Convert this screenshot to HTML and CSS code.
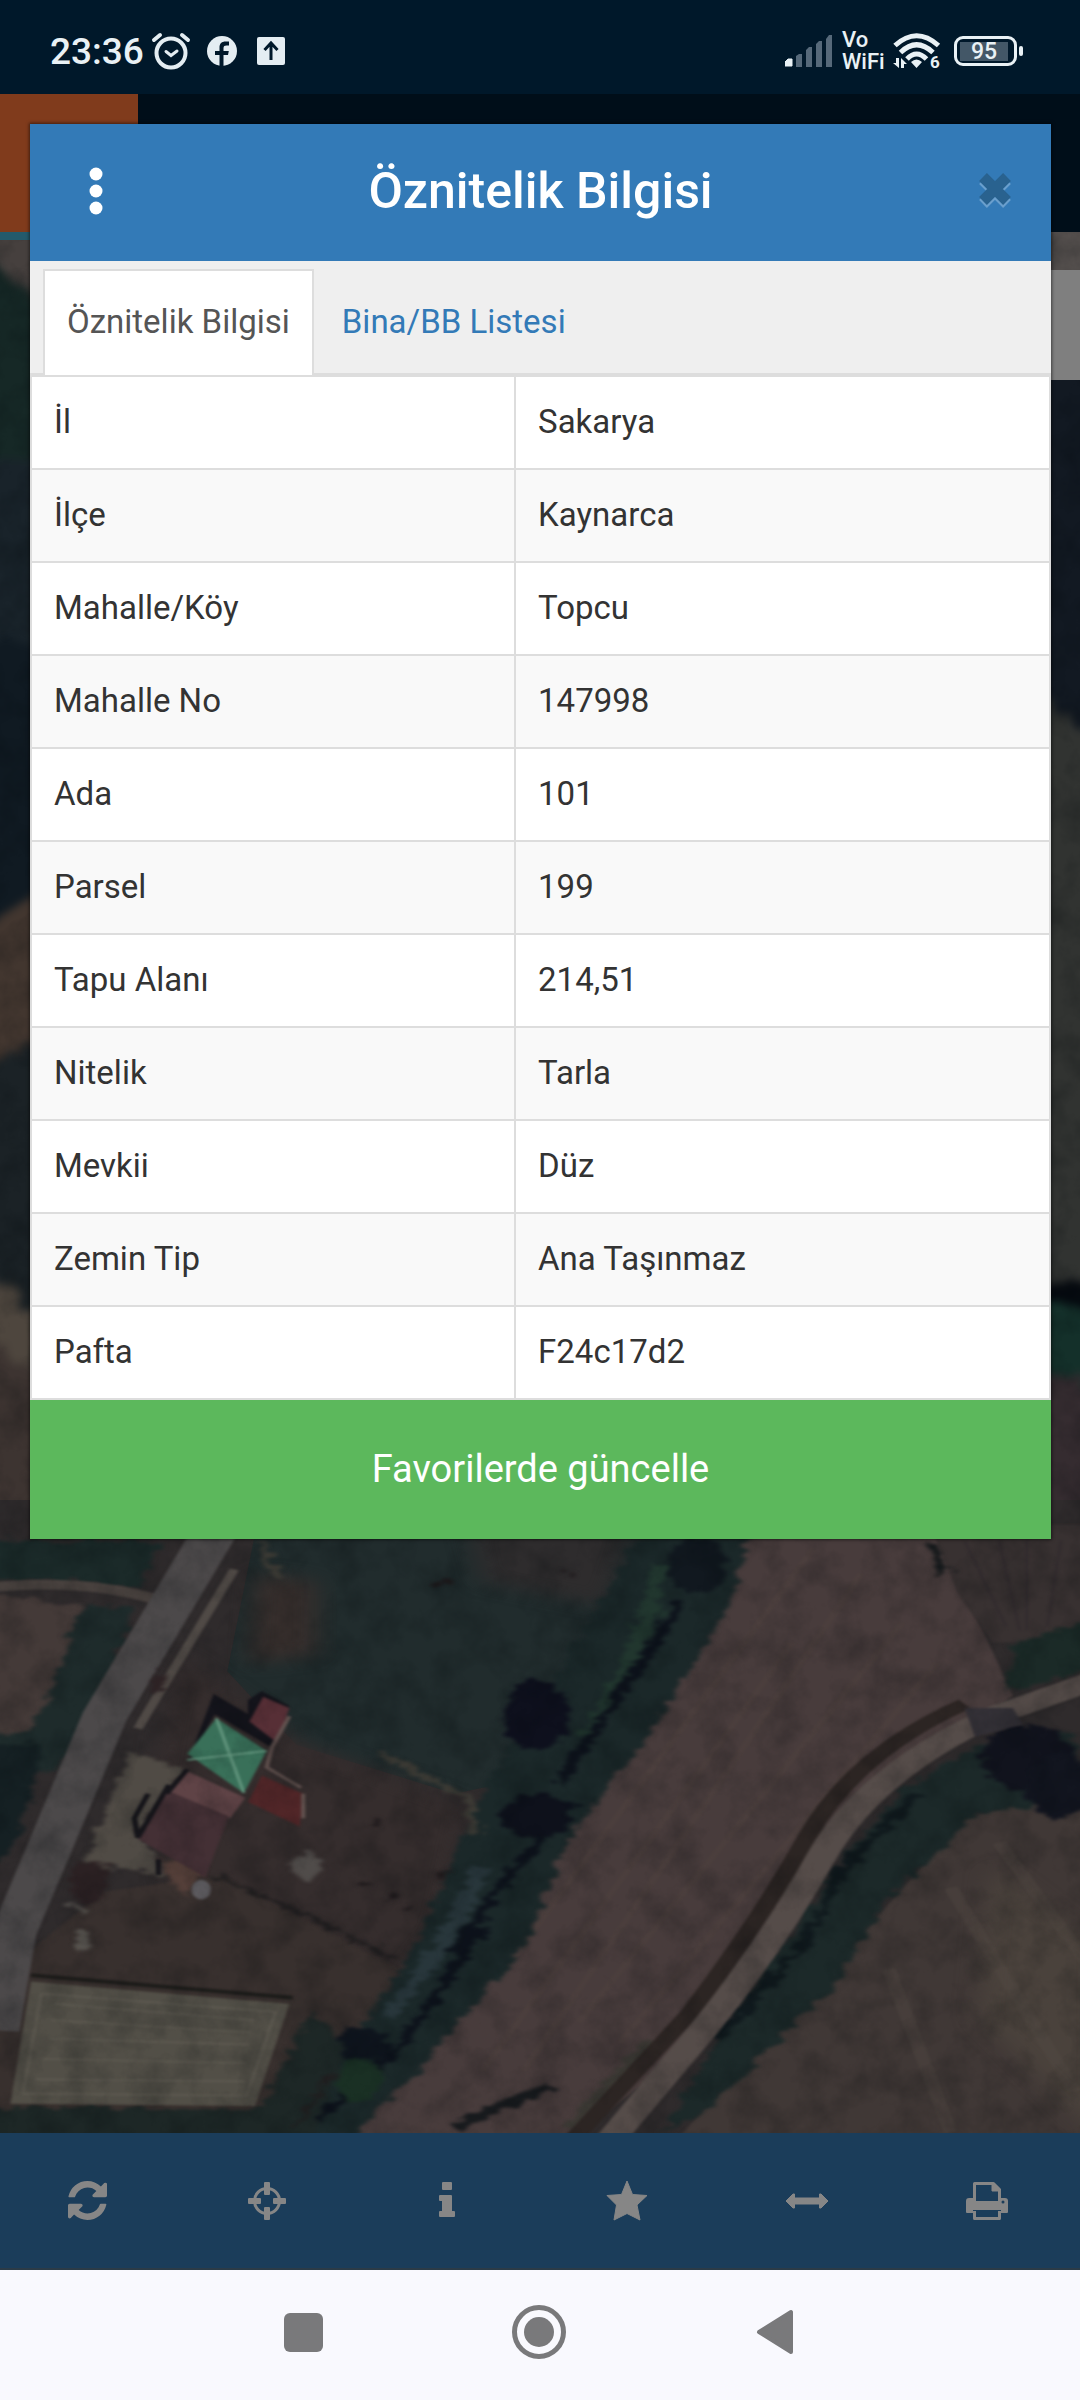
FILE: index.html
```
<!DOCTYPE html>
<html lang="tr">
<head>
    <meta charset="UTF-8">
    <meta name="viewport" content="width=device-width, initial-scale=1.0">
    <title>Öznitelik Bilgisi</title>
    <link rel="stylesheet" href="styles.css">
</head>
<body>
    <div class="status-bar">
        <div class="status-left">
            <span class="clock">23:36</span>
            <svg class="alarm-icon" width="40" height="38" viewBox="0 0 40 38" fill="none" stroke="#e4edf2" stroke-linecap="round">
                <circle cx="20" cy="21" r="14.500" stroke-width="4"/>
                <path d="M3 8l6-5M37 8l-6-5" stroke-width="4"/>
                <path d="M15 19.500l5 4 6-4.500" stroke-width="3"/>
            </svg>
            <svg width="30" height="30" viewBox="0 0 30 30">
                <circle cx="15" cy="15" r="15" fill="#e4edf2"/>
                <path d="M12.500 30V19H8v-4h4.500v-3.500c0-4 2.300-6 6-6h3.500v4h-2.500c-2 0-3 .8-3 2.500v3h5.300l-.8 4h-4.500v11z" fill="#00182a"/>
            </svg>
            <svg width="28" height="28" viewBox="0 0 28 28">
                <rect width="28" height="28" rx="2" fill="#e4edf2"/>
                <path d="M14 23V7M7.500 13L14 6l6.500 7" fill="none" stroke="#00182a" stroke-width="3"/>
            </svg>
        </div>
        <div class="status-right">
            <svg width="48" height="32" viewBox="0 0 48 32" fill="#56697a">
                <path d="M0 31v-4l3-3h4v7z" fill="#e9f1f5" stroke="#e9f1f5" stroke-linejoin="round"/>
                <path d="M11 32V21l3-2h3v13zM21 32V15l3-3h3v20zM31 32V9l3-3h3v26zM41 32V4l3-4h3v32z"/>
            </svg>
            <span class="vowifi"><span>Vo</span><span>WiFi</span></span>
            <svg width="48" height="44" viewBox="0 -3 48 44">
                <g fill="none" stroke="#e9f1f5" stroke-width="5">
                    <path d="M2 13.500Q23.500-6 45.500 13.500"/>
                    <path d="M7.500 20.500Q23.500 5 40 20.500"/>
                    <path d="M14 27Q23.500 17 33.500 27"/>
                </g>
                <path d="M18 30q5.500-5 11 0l-5.500 6zM0 31h3v-5h3v10zM8 26l6 6h-3v4H8z" fill="#e9f1f5"/>
                <text class="wifi-gen" x="37" y="36">6</text>
            </svg>
            <span class="battery"><span>95</span></span>
        </div>
    </div>

    <div class="app">
        <header class="app-header">
            <div class="app-logo"></div>
        </header>

        <div class="map">
            <svg class="map-view" viewBox="0 232 1080 1901" preserveAspectRatio="xMidYMin slice">
                <defs>
                    <filter id="rough" x="-10%" y="-10%" width="120%" height="120%" color-interpolation-filters="sRGB">
                        <feTurbulence type="fractalNoise" baseFrequency="0.05" numOctaves="4" seed="4"/>
                        <feDisplacementMap in="SourceGraphic" scale="36" xChannelSelector="R" yChannelSelector="G" result="edge"/>
                        <feGaussianBlur in="edge" stdDeviation="4"/>
                    </filter>
                    <filter id="soft" color-interpolation-filters="sRGB"><feGaussianBlur stdDeviation="2"/></filter>
                    <filter id="haze" x="-30%" y="-30%" width="160%" height="160%" color-interpolation-filters="sRGB"><feGaussianBlur stdDeviation="18"/></filter>
                    <filter id="grain" x="0" y="0" width="100%" height="100%" color-interpolation-filters="sRGB">
                        <feTurbulence type="fractalNoise" baseFrequency="0.03" numOctaves="5" seed="8"/>
                        <feColorMatrix values="0 0 0 0 0  0 0 0 0 0.02  0 0 0 0 0.03  1.400 0 0 0 -0.550"/>
                    </filter>
                </defs>
                <rect y="232" width="1080" height="1901" fill="#2c2c2c"/>

                <!-- land on both sides, above the fields -->
                <g filter="url(#rough)">
                    <path d="M-30 222h90v70l-90-30z" fill="#46403e"/>
                    <path d="M-30 250l90 60v330h-90z" fill="#162826"/>
                    <path d="M-30 460h90v190h-90z" fill="#19232a"/>
                    <path d="M-30 640h90v270l-90 50z" fill="#101a22"/>
                    <path d="M-30 925l90-30v150l-90 20z" fill="#42362f"/>
                    <path d="M-30 1065l90-20v290l-90-70z" fill="#1b2226"/>
                    <path d="M-30 1265l90 60v70l-90-60z" fill="#4e463e"/>
                    <path d="M-30 1330l90 70v140h-90z" fill="#3d3431"/>
                    <path d="M1030 222h70v80h-70z" fill="#55504e"/>
                    <path d="M1030 360h70v370h-70z" fill="#121922"/>
                    <path d="M1030 690l70 60v540h-70z" fill="#313331"/>
                    <path d="M1030 1290h70v85h-70z" fill="#14302a"/>
                    <path d="M1030 1285h70v18h-70z" fill="#05090f"/>
                    <path d="M1030 1375h70v190h-70z" fill="#352c30"/>
                </g>

                <!-- lower half of the scene -->
                <g transform="translate(0 1500) scale(0.689 0.408)">
                    <rect width="1568" height="1560" fill="#2f2b2c"/>
                    <path d="M380 0H1000L960 300 880 640 660 720 430 600 330 420z" fill="#212c2d"/>
                    <path d="M680 60l240 0-40 200-180-60z" fill="#2e2c2d" filter="url(#haze)"/>
                    <path d="M370 180l90 20 0 180-100 20z" fill="#362e2c" filter="url(#haze)"/>
                    <path d="M260 380l180 220 240 150-40 300-60 130-330-200-30-250z" fill="#352d2d" filter="url(#haze)"/>
                    <path d="M150 960l170-40 260 230-130 420H-20v-380z" fill="#38302e" filter="url(#soft)"/>

                    <!-- fields -->
                    <path d="M1080 60h270l60 200 60 220-270 330-240 590-130 160H440l230-400 150-500z" fill="#483c3c" filter="url(#soft)"/>
                    <path d="M1350 60h240v280l-150 10-50-120z" fill="#383131" filter="url(#soft)"/>
                    <path d="M1400 780l180-80v890H970l200-370z" fill="#403836" filter="url(#soft)"/>
                    <path d="M1440 900l160 200v470l-180-300z" fill="#4a423c" filter="url(#haze)"/>
                    <path d="M-20 230l140 30-30 260-70 80-40-10z" fill="#443a38" filter="url(#rough)"/>
                    <g stroke="#51443f" stroke-width="10" opacity=".35" filter="url(#soft)">
                        <path d="M1180 120L720 1180M1250 180L760 1400M1310 300L840 1280M1150 350L700 1400M1360 400L900 1330"/>
                    </g>
                    <g stroke="#29242a" stroke-width="4" opacity=".4" filter="url(#soft)">
                        <path d="M1400 100l60 210M1450 100l30 220M1490 100v220M1540 100l-20 210"/>
                    </g>
                    <g stroke="#574e47" stroke-width="20" opacity=".3" filter="url(#soft)" fill="none">
                        <path d="M1450 840l130 300M1380 950l180 500M1290 1150l90 400"/>
                    </g>

                    <!-- trees -->
                    <g filter="url(#rough)">
                        <path d="M-20 100h260l-40 110-220-20z" fill="#1b2a29"/>
                        <path d="M120 260h80l-70 300-50 110L-20 640v-60l70-20z" fill="#1e2b2b"/>
                        <path d="M-20 600h80l-30 220-50 100z" fill="#152023"/>
                        <path d="M960 60h130l-30 200-110 300-120 260-70 280-160 310-90 150H430l60-190 100-240 80-300 60-200 80-200 110-320z" fill="#1b2829"/>
                        <path d="M970 240l-100 320 50-240z" fill="#22382f"/>
                        <path d="M960 160L920 380 850 580" fill="none" stroke="#21362e" stroke-width="22"/>
                        <path d="M990 250L880 520 810 700M830 740l-120 240-50 130M700 1050l-120 290-120 180" fill="none" stroke="#0d121b" stroke-width="16"/>
                        <ellipse cx="1010" cy="160" rx="42" ry="70" fill="#11181f"/>
                        <ellipse cx="778" cy="530" rx="48" ry="88" fill="#0e101d"/>
                        <ellipse cx="780" cy="775" rx="50" ry="56" fill="#0e111b"/>
                        <ellipse cx="525" cy="1335" rx="40" ry="44" fill="#0f151e"/>
                        <path d="M700 900l-60 200-80 170" fill="none" stroke="#28363b" stroke-width="26"/>
                        <ellipse cx="520" cy="1420" rx="34" ry="50" fill="#1a3024"/>
                        <path d="M1470 350l130-60v120l-140 60z" fill="#1b2a27"/>
                        <path d="M1420 600l140-30 20 160-160 40-130 200-80 220-180 300-70 70 80-240 180-430 90-180z" fill="#1c2929"/>
                        <path d="M1330 720l-110 190-50 170-130 240" fill="none" stroke="#10191d" stroke-width="16"/>
                        <ellipse cx="1490" cy="630" rx="66" ry="80" fill="#11131d"/>
                        <ellipse cx="1540" cy="700" rx="50" ry="80" fill="#12151f"/>
                        <path d="M-20 1490h400l70-240 50 80-50 260H-20z" fill="#1d2726"/>
                        <path d="M660 1540l60-50 80-50" fill="none" stroke="#171a1d" stroke-width="22"/>
                        <path d="M310 920l150 110 120 100M430 1540l50-130" fill="none" stroke="#201e1f" stroke-width="9"/>
                        <path d="M550 620l130 110 10 90M380 100l20 90" fill="none" stroke="#3e3c36" stroke-width="14"/>
                        <path d="M1355 110l14 70" stroke="#14181a" stroke-width="18"/>
                        <path d="M830 1540l90-170 30-40" fill="none" stroke="#3a3833" stroke-width="24"/>
                    </g>

                    <!-- roads -->
                    <g fill="none" filter="url(#soft)" stroke-linejoin="round">
                        <path d="M-20 215Q120 190 230 245" stroke="#48413e" stroke-width="24"/>
                        <path d="M325 40L152 530 85 800 20 1060-5 1300" stroke="#4c494a" stroke-width="66"/>
                        <path d="M340 170L200 560" stroke="#504a46" stroke-width="14"/>
                        <path d="M1400 500Q1240 620 1170 830T1000 1260L830 1570" stroke="#2c2523" stroke-width="28"/>
                        <path d="M1600 435L1440 530Q1260 670 1190 880T1020 1300L880 1580" stroke="#554c49" stroke-width="44"/>
                        <path d="M1400 510l70 0 15 40-70 30z" fill="#343137"/>
                    </g>

                    <!-- farm yard and houses -->
                    <g filter="url(#rough)">
                        <path d="M190 620l80 40-70 150 40 110-120-30z" fill="#504b45"/>
                        <path d="M110 880l50 20-20 90-40-20zM225 420l20 10-10 50-15-20z" fill="#2d2224"/>
                        <ellipse cx="445" cy="895" rx="20" ry="34" fill="#504c4a"/>
                        <path d="M110 1050l20 10-8 50-10-20zM95 990l25 10v20z" fill="#5c5853"/>
                        <path d="M230 880l70 20-30 80z" fill="#543f39"/>
                        <g fill="#1f1a1c">
                            <circle cx="530" cy="940" r="9"/>
                            <circle cx="568" cy="972" r="10"/>
                            <circle cx="590" cy="1000" r="7"/>
                            <circle cx="545" cy="790" r="7"/>
                            <circle cx="640" cy="920" r="9"/>
                            <circle cx="645" cy="200" r="7"/>
                            <circle cx="825" cy="185" r="7"/>
                        </g>
                    </g>
                    <g filter="url(#soft)">
                        <path d="M310 475l50 50 0-35 20-22 40 37-28 100-80-80-40 120z" fill="#14141b"/>
                        <path d="M382 482l38 28-18 85-40-52z" fill="#572f36"/>
                        <path d="M380 675l60 45-5 80-75-60z" fill="#512628"/>
                        <path d="M420 530l-25 75-8 50 50 50M440 720v60" fill="none" stroke="#635350" stroke-width="6"/>
                        <path d="M272 665l84 65-22 50-92-60z" fill="#5f4346"/>
                        <path d="M240 710l92 65-34 150-98-95z" fill="#443035"/>
                        <path d="M314 535l73 80-33 104-82-97z" fill="#397059"/>
                        <path d="M314 535l40 183M272 637l115-22" stroke="#679a82" stroke-width="4"/>
                        <path d="M215 720l-20 60 5 48 45-130M272 660l-30 60M230 880v40" fill="none" stroke="#17161b" stroke-width="8"/>
                        <ellipse cx="292" cy="955" rx="14" ry="24" fill="#5c5a5e"/>
                    </g>
                    <g filter="url(#soft)">
                        <path d="M45 1180l375 55-50 250L15 1480z" fill="#524f47"/>
                        <path d="M45 1165l380 55" stroke="#1e1d1b" stroke-width="10"/>
                        <g stroke="#5e5a51" stroke-width="4" fill="none">
                            <path d="M60 1210l340 45-42 205-325-5zM80 1235l290 40M75 1275l290 30M70 1320l290 15M60 1370l295 10M50 1420l305 5"/>
                        </g>
                    </g>
                </g>
                <rect y="232" width="1080" height="1901" filter="url(#grain)" opacity=".3"/>
            </svg>
            <div class="map-control"></div>
        </div>

        <div class="toolbar">
            <button type="button" aria-label="Yenile">
                <svg width="39" height="39" viewBox="0 0 1536 1536" fill="currentColor">
                    <path d="M1511 928q0 5-1 7-64 268-268 434.500T764 1536q-146 0-282.500-55T238 1324l-129 129q-19 19-45 19t-45-19-19-45V960q0-26 19-45t45-19h448q26 0 45 19t19 45-19 45l-137 137q71 66 161 102t187 36q134 0 250-65t186-179q11-17 53-117 8-23 30-23h192q13 0 22.500 9.500t9.500 22.500zm25-800v448q0 26-19 45t-45 19h-448q-26 0-45-19t-19-45 19-45l138-138Q969 256 768 256q-134 0-250 65T332 500q-11 17-53 117-8 23-30 23H50q-13 0-22.500-9.500T18 608v-7q65-268 270-434.500T768 0q146 0 284 55.500T1297 212l130-129q19-19 45-19t45 19 19 45z"/>
                </svg>
            </button>
            <button type="button" aria-label="Konum">
                <svg width="38" height="38" viewBox="0 0 38 38" fill="currentColor">
                    <circle cx="19" cy="19" r="12.500" fill="none" stroke="currentColor" stroke-width="3"/>
                    <rect x="16" y="0" width="6" height="13" rx="1"/>
                    <rect x="16" y="25" width="6" height="13" rx="1"/>
                    <rect x="0" y="16" width="13" height="6" rx="1"/>
                    <rect x="25" y="16" width="13" height="6" rx="1"/>
                </svg>
            </button>
            <button type="button" aria-label="Bilgi">
                <svg width="16" height="38" viewBox="0 0 16 38" fill="currentColor">
                    <rect x="3" y="0" width="10" height="8" rx="1"/>
                    <path d="M1 13h11q1 0 1 1v15h2q1 0 1 1v4q0 1-1 1H1q-1 0-1-1v-4q0-1 1-1h2V19H1q-1 0-1-1v-4q0-1 1-1z"/>
                </svg>
            </button>
            <button type="button" aria-label="Favoriler">
                <svg width="42" height="42" viewBox="0 0 42 42" fill="currentColor" stroke="currentColor" stroke-width="1" stroke-linejoin="round">
                    <path d="M21 1l5.500 13.500L41 15.500 31 25l3 15-13-6.500L8 40l2.500-15L1 15.500l14.500-1z"/>
                </svg>
            </button>
            <button type="button" aria-label="Ölçüm">
                <svg width="44" height="16" viewBox="0 0 44 16" fill="currentColor" stroke="currentColor" stroke-width="1" stroke-linejoin="round">
                    <path d="M1 8l7-7h1.500v4h25V1H36l7 7-7 7h-1.500v-4h-25v4H8z"/>
                </svg>
            </button>
            <button type="button" aria-label="Yazdır">
                <svg width="42" height="38" viewBox="0 0 42 38" fill="none" stroke="currentColor" stroke-width="3" stroke-linejoin="round">
                    <path d="M8.500 20V1.500h19l6 6V20M8.500 29v7.500h25V29"/>
                    <path d="M26 1l8 8h-8z" fill="currentColor" stroke-width="1"/>
                    <path d="M3 16h4v3h28v-3h4q3 0 3 3v11q0 1-1 1h-6v-3H7v3H1q-1 0-1-1V19q0-3 3-3z" fill="currentColor" stroke="none"/>
                    <circle cx="37" cy="20" r="1.500" fill="#1c3d5a" stroke="none"/>
                </svg>
            </button>
        </div>

        <div class="modal">
            <div class="modal-header">
                <button type="button" class="menu-btn" aria-label="Menü">
                    <svg width="14" height="48" viewBox="0 0 14 48" fill="#fff">
                        <circle cx="7" cy="7" r="6.500"/>
                        <circle cx="7" cy="24" r="6.500"/>
                        <circle cx="7" cy="41" r="6.500"/>
                    </svg>
                </button>
                <h1>Öznitelik Bilgisi</h1>
                <button type="button" class="close-btn" aria-label="Kapat">
                    <svg width="34" height="37" viewBox="0 0 34 37" stroke-width="11">
                        <path d="M5 8l24 24M29 8L5 32" stroke="#6a9fcd"/>
                        <path d="M5 5l24 24M29 5L5 29" stroke="#29628f"/>
                    </svg>
                </button>
            </div>

            <nav class="tabs">
                <a href="#" class="tab active">Öznitelik Bilgisi</a>
                <a href="#" class="tab">Bina/BB Listesi</a>
            </nav>

            <table class="attributes">
                <tbody>
                    <tr><th scope="row">İl</th><td>Sakarya</td></tr>
                    <tr><th scope="row">İlçe</th><td>Kaynarca</td></tr>
                    <tr><th scope="row">Mahalle/Köy</th><td>Topcu</td></tr>
                    <tr><th scope="row">Mahalle No</th><td>147998</td></tr>
                    <tr><th scope="row">Ada</th><td>101</td></tr>
                    <tr><th scope="row">Parsel</th><td>199</td></tr>
                    <tr><th scope="row">Tapu Alanı</th><td>214,51</td></tr>
                    <tr><th scope="row">Nitelik</th><td>Tarla</td></tr>
                    <tr><th scope="row">Mevkii</th><td>Düz</td></tr>
                    <tr><th scope="row">Zemin Tip</th><td>Ana Taşınmaz</td></tr>
                    <tr><th scope="row">Pafta</th><td>F24c17d2</td></tr>
                </tbody>
            </table>

            <button type="button" class="favorite-btn">Favorilerde güncelle</button>
        </div>
    </div>

    <div class="system-nav">
        <button type="button" aria-label="Son uygulamalar">
            <svg width="39" height="39" viewBox="0 0 39 39"><rect width="39" height="39" rx="6" fill="#79797b"/></svg>
        </button>
        <button type="button" aria-label="Ana ekran">
            <svg width="54" height="54" viewBox="0 0 54 54">
                <circle cx="27" cy="27" r="24.500" fill="none" stroke="#79797b" stroke-width="5"/>
                <circle cx="27" cy="27" r="15" fill="#79797b"/>
            </svg>
        </button>
        <button type="button" aria-label="Geri">
            <svg width="38" height="46" viewBox="0 0 38 46"><path d="M3 23L35 3v40z" fill="#79797b" stroke="#79797b" stroke-width="4" stroke-linejoin="round"/></svg>
        </button>
    </div>
</body>
</html>
```
FILE: styles.css
```
* {
    box-sizing: border-box;
}
body {
    margin: 0;
    min-height: 100vh;
    display: flex;
    flex-direction: column;
    font-family: Roboto, "Liberation Sans", sans-serif;
    color: #333;
    background-color: #00182a;
}
button {
    padding: 0;
    border: none;
    background: none;
    font-family: inherit;
    cursor: pointer;
}
svg {
    display: block;
}

/* Status bar */
.status-bar {
    display: flex;
    justify-content: space-between;
    align-items: center;
    height: 94px;
    padding: 8px 56px 0 50px;
    color: #e9f1f5;
    background-color: #00182a;
}
.status-left {
    display: flex;
    align-items: center;
    gap: 20px;
}
.clock {
    font-size: 37px;
    font-weight: 500;
}
.alarm-icon {
    margin-left: -13px;
    margin-right: -4px;
}
.status-right {
    display: flex;
    align-items: center;
    gap: 9px;
}
.vowifi {
    display: flex;
    flex-direction: column;
    width: 42px;
    font-size: 22px;
    line-height: 22px;
    font-weight: 500;
}
.wifi-gen {
    font-size: 17px;
    font-weight: 700;
    fill: #e9f1f5;
}
.battery {
    position: relative;
    width: 63px;
    height: 30px;
    margin: 0 7px 0 4px;
    padding: 3px;
    border: 3px solid #e9f1f5;
    border-radius: 9px;
    font-size: 23px;
    line-height: 19px;
    font-weight: 500;
    text-align: center;
}
.battery span {
    display: block;
    width: 48px;
    background-color: #435767;
}
.battery::after {
    content: "";
    position: absolute;
    top: 7px;
    right: -9px;
    width: 4px;
    height: 10px;
    border-radius: 2px;
    background-color: #e9f1f5;
}

/* Map page behind the dialog */
.app {
    position: relative;
    flex: 1;
    display: flex;
    flex-direction: column;
}
.app-header {
    height: 138px;
    background-color: #000e19;
}
.app-logo {
    width: 138px;
    height: 100%;
    background-color: #803b1c;
}
.map {
    position: relative;
    flex: 1;
    overflow: hidden;
    background-color: #2c2c2c;
}
.map::after {
    content: "";
    position: absolute;
    top: 0;
    left: 0;
    width: 138px;
    height: 8px;
    background-color: #245a6c;
}
.map-view {
    position: absolute;
    width: 100%;
    height: 100%;
}
.map-control {
    position: absolute;
    top: 38px;
    right: 0;
    width: 110px;
    height: 110px;
    background-color: #7f7f7f;
}
.toolbar {
    display: grid;
    grid-template-columns: repeat(6, 1fr);
    height: 137px;
    border-bottom: 2px solid #2b3b47;
    background-color: #1b3d5a;
}
.toolbar button {
    display: flex;
    align-items: center;
    justify-content: center;
    padding-right: 6px;
    color: #868686;
}

/* Dialog */
.modal {
    position: absolute;
    top: 30px;
    left: 30px;
    right: 29px;
    background-color: #fff;
    box-shadow: 0 0 3px 1px rgba(0, 0, 0, 0.5);
}
.modal-header {
    display: flex;
    align-items: center;
    justify-content: space-between;
    height: 137px;
    padding: 0 39px 4px 59px;
    background-color: #337ab7;
}
.modal-header h1 {
    margin: 0;
    font-size: 50px;
    line-height: 56px;
    font-weight: 500;
    color: #fff;
}
.tabs {
    display: flex;
    height: 114px;
    padding: 8px 13px 0;
    border-bottom: 2px solid #ddd;
    background-color: #efefef;
}
.tab {
    display: flex;
    align-items: center;
    margin-right: 4px;
    margin-bottom: -2px;
    padding: 0 22px 4px;
    border: 2px solid transparent;
    border-bottom: none;
    font-size: 33px;
    color: #337ab7;
    text-decoration: none;
}
.tab.active {
    border-color: #ddd;
    color: #555;
    background-color: #fff;
}
.attributes {
    width: 100%;
    table-layout: fixed;
    border-collapse: separate;
    border-spacing: 0;
    border: 2px solid #ddd;
    border-bottom: none;
    font-size: 33px;
}
.attributes th, .attributes td {
    height: 93px;
    padding: 0 22px 2px;
    border-bottom: 2px solid #ddd;
    font-weight: 400;
    text-align: left;
}
.attributes th {
    width: 47.6%;
    border-right: 2px solid #ddd;
}
.attributes tr:nth-child(even) {
    background-color: #f9f9f9;
}
.favorite-btn {
    display: block;
    width: 100%;
    height: 139px;
    padding-bottom: 2px;
    font-size: 38px;
    color: #fff;
    background-color: #5cb85c;
}

/* Phone navigation */
.system-nav {
    display: flex;
    justify-content: center;
    height: 130px;
    padding: 0 2px 6px 0;
    background-color: #f9f9fe;
}
.system-nav button {
    display: flex;
    align-items: center;
    justify-content: center;
    width: 236px;
}
```
